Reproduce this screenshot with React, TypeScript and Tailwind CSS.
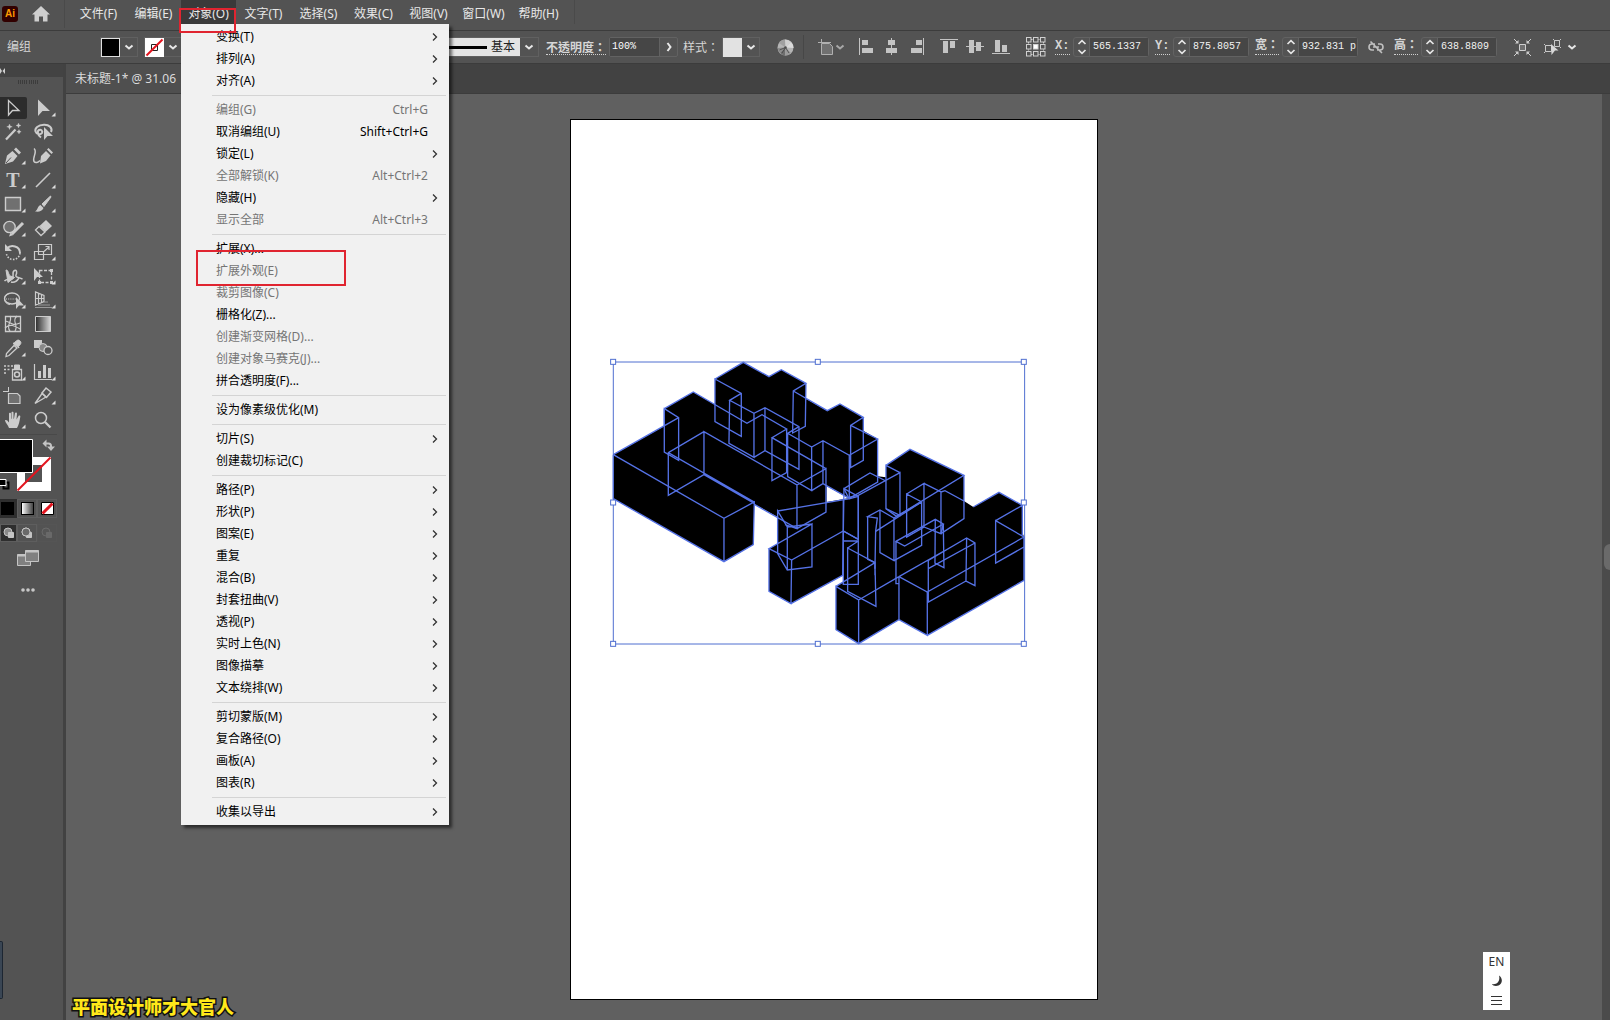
import React from 'react';
import clsx from 'clsx';

type MenuEntry = { label: string; shortcut?: string; sub?: boolean; off?: boolean; marked?: boolean };

const menuBar = ['文件(F)', '编辑(E)', '对象(O)', '文字(T)', '选择(S)', '效果(C)', '视图(V)', '窗口(W)', '帮助(H)'];

const objectMenu: MenuEntry[][] = [
    [
        { label: '变换(T)', sub: true },
        { label: '排列(A)', sub: true },
        { label: '对齐(A)', sub: true },
    ],
    [
        { label: '编组(G)', shortcut: 'Ctrl+G', off: true },
        { label: '取消编组(U)', shortcut: 'Shift+Ctrl+G' },
        { label: '锁定(L)', sub: true },
        { label: '全部解锁(K)', shortcut: 'Alt+Ctrl+2', off: true },
        { label: '隐藏(H)', sub: true },
        { label: '显示全部', shortcut: 'Alt+Ctrl+3', off: true },
    ],
    [
        { label: '扩展(X)...' },
        { label: '扩展外观(E)', off: true, marked: true },
        { label: '裁剪图像(C)', off: true },
        { label: '栅格化(Z)...' },
        { label: '创建渐变网格(D)...', off: true },
        { label: '创建对象马赛克(J)...', off: true },
        { label: '拼合透明度(F)...' },
    ],
    [{ label: '设为像素级优化(M)' }],
    [{ label: '切片(S)', sub: true }, { label: '创建裁切标记(C)' }],
    [
        { label: '路径(P)', sub: true },
        { label: '形状(P)', sub: true },
        { label: '图案(E)', sub: true },
        { label: '重复', sub: true },
        { label: '混合(B)', sub: true },
        { label: '封套扭曲(V)', sub: true },
        { label: '透视(P)', sub: true },
        { label: '实时上色(N)', sub: true },
        { label: '图像描摹', sub: true },
        { label: '文本绕排(W)', sub: true },
    ],
    [
        { label: '剪切蒙版(M)', sub: true },
        { label: '复合路径(O)', sub: true },
        { label: '画板(A)', sub: true },
        { label: '图表(R)', sub: true },
    ],
    [{ label: '收集以导出', sub: true }],
];

const Chevron: React.FC<{ dir?: 'down' | 'right' }> = ({ dir = 'down' }) => (
    <svg width="10" height="10" viewBox="0 0 10 10" fill="none" stroke="currentColor" strokeWidth="2">
        <path d={dir === 'down' ? 'M1.5 3.5 5 6.5 8.5 3.5' : 'M3.5 1 6.5 5 3.5 9'} />
    </svg>
);

const ObjectMenu: React.FC = () => (
    <div
        role="menu"
        className="absolute left-0 top-full z-20 w-[268px] bg-[#f1f1f1] py-[2px] text-black shadow-[3px_3px_3px_rgba(0,0,0,0.55)]"
    >
        {objectMenu.map((group, i) => (
            <div key={i}>
                {i > 0 && <div className="my-[3px] ml-[31px] mr-[3px] h-px bg-[#d4d4d4]" />}
                {group.map((item) => (
                    <button
                        key={item.label}
                        role="menuitem"
                        className={clsx(
                            'relative flex h-[22px] w-full items-center pl-[35px] pr-[9px] text-left',
                            item.off && 'text-[#757575]'
                        )}
                    >
                        <span className="flex-1">{item.label}</span>
                        <span className="mr-[12px]">{item.shortcut}</span>
                        {item.sub && (
                            <svg className="-ml-[12px]" width="12" height="12" viewBox="0 0 12 12" fill="none" stroke="#333" strokeWidth="1.3">
                                <path d="M5 2.5 8.5 6 5 9.5" />
                            </svg>
                        )}
                        {item.marked && (
                            <span className="absolute -top-[10px] left-[15px] z-10 h-[36px] w-[150px] border-2 border-[#e02430]" />
                        )}
                    </button>
                ))}
            </div>
        ))}
    </div>
);

const MenuBar: React.FC = () => (
    <header className="flex h-[30px] items-start bg-[#535353] text-[#e8e8e8]">
        <div className="flex h-[28px] w-[65px] items-center gap-[14px] border-r border-[#4a4a4a] pl-[2px]">
            <span className="flex size-[16px] items-center justify-center rounded-[3px] bg-[#310000] font-['Liberation_Sans'] text-[10px] font-bold text-[#ff9a00]">
                Ai
            </span>
            <button aria-label="主页">
                <svg width="18" height="16" viewBox="0 0 18 16" fill="#cfcfcf">
                    <path d="M9 0 18 8.5H15.5V15.5H11V10.5H7V15.5H2.5V8.5H0z" />
                </svg>
            </button>
        </div>
        <nav className="flex border-r border-[#4a4a4a] pl-[6px] pr-[8px]">
            {menuBar.map((name) => {
                const open = name === '对象(O)';
                return (
                    <div key={name} className="relative">
                        <button className={clsx('h-[24px] w-[55px] pt-[3px] whitespace-nowrap', open && 'bg-[#3a3a3a]')}>{name}</button>
                        {open && (
                            <>
                                <ObjectMenu />
                                <span className="pointer-events-none absolute -left-[2px] top-[8px] z-30 h-[25px] w-[57px] border-2 border-[#e02430]" />
                            </>
                        )}
                    </div>
                );
            })}
        </nav>
    </header>
);

const Divider: React.FC = () => <span className="h-[24px] w-px shrink-0 bg-[#474747]" />;

const NumberField: React.FC<{ id: string; label: string; value: string }> = ({ id, label, value }) => (
    <div className="flex shrink-0 items-center gap-[3px]">
        <label
            htmlFor={id}
            className="min-w-[15px] whitespace-nowrap border-b border-dotted border-[#d0d0d0] font-['Liberation_Mono','Noto_Sans_CJK_TC',monospace] leading-[15px] font-bold"
        >
            {label}
        </label>
        <div className="flex h-[20px] w-[76px] rounded-[3px] border border-[#626262]">
            <button aria-label="增减" className="flex w-[16px] items-center justify-center border-r border-[#626262]">
                <svg width="10" height="16" viewBox="0 0 10 16" fill="none" stroke="#e6e6e6" strokeWidth="1.7">
                    <path d="M1.5 5 5 1.7 8.5 5M1.5 11 5 14.3 8.5 11" />
                </svg>
            </button>
            <input
                id={id}
                defaultValue={value}
                className="min-w-0 flex-1 bg-[#464646] pl-[3px] font-['Liberation_Mono',monospace] text-[10px] text-[#f2f2f2]"
            />
        </div>
    </div>
);

const alignIcons = [
    'M1 0h1v17h-1zM4 2h6v5h-6zM4 10h11v5h-11z',
    'M7 0h1v17h-1zM4 2h7v5h-7zM2 10h11v5h-11z',
    'M13 0h1v17h-1zM6 2h6v5h-6zM1 10h11v5h-11z',
    'M0 1h18v1h-18zM3 3h5v12h-5zM10 3h5v7h-5z',
    'M0 8h18v1h-18zM3 2h5v13h-5zM10 4h5v9h-5z',
    'M0 15h18v1h-18zM3 2h5v12h-5zM10 7h5v7h-5z',
];

const OptionsBar: React.FC = () => (
    <section className="flex h-[34px] items-center overflow-hidden border-y border-[#3c3c3c] bg-[#535353] text-[#d6d6d6]">
        <span className="w-[100px] shrink-0 pl-[7px]">编组</span>
        <button aria-label="填色" className="flex h-[20px] w-[38px] shrink-0 items-center border border-[#606060] text-[#e8e8e8]">
            <span className="size-[19px] border border-[#e0e0e0] bg-black" />
            <span className="ml-[4px]"><Chevron /></span>
        </button>
        <button aria-label="描边" className="ml-[6px] flex h-[20px] w-[38px] shrink-0 items-center border border-[#606060] text-[#e8e8e8]">
            <svg width="19" height="19" viewBox="0 0 19 19">
                <path d="M0 0h19v19h-19z" fill="#fff" />
                <path d="M6.500 6.500h6v6h-6z" fill="none" stroke="#222" />
                <path d="M1.500 17.500 17.500 1.500" stroke="#e3141e" strokeWidth="2" />
            </svg>
            <span className="ml-[4px]"><Chevron /></span>
        </button>
        <button
            aria-label="画笔定义"
            className="ml-[218px] flex h-[20px] w-[139px] shrink-0 items-center border border-[#606060] text-[#e8e8e8]"
        >
            <span className="flex h-full w-[119px] items-center gap-[4px] bg-[#e4e4e4] pr-[5px] text-[#222]">
                <span className="h-[3px] flex-1 bg-black" />
                基本
            </span>
            <span className="ml-[4px]"><Chevron /></span>
        </button>
        <label
            htmlFor="opacity"
            className="ml-[7px] shrink-0 whitespace-nowrap border-b border-dotted border-[#d0d0d0] font-['Noto_Sans_CJK_TC',sans-serif] leading-[15px] font-bold"
        >
            不透明度：
        </label>
        <div className="ml-[3px] flex h-[20px] w-[69px] shrink-0 rounded-[2px] border border-[#626262] text-[#e8e8e8]">
            <input
                id="opacity"
                defaultValue="100%"
                className="min-w-0 flex-1 bg-[#464646] pl-[2px] font-['Liberation_Mono',monospace] text-[10px] text-white"
            />
            <button aria-label="不透明度选项" className="flex w-[18px] items-center justify-center border-l border-[#626262]">
                <Chevron dir="right" />
            </button>
        </div>
        <span className="ml-[5px] shrink-0 font-['Noto_Sans_CJK_TC',sans-serif]">样式：</span>
        <button aria-label="图形样式" className="ml-[3px] flex h-[20px] w-[38px] shrink-0 items-center border border-[#606060] text-[#e8e8e8]">
            <span className="size-[19px] bg-[#e2e2e2]" />
            <span className="ml-[4px]"><Chevron /></span>
        </button>
        <span className="ml-[8px]"><Divider /></span>
        <button aria-label="重新着色图稿" className="mx-[9px] shrink-0">
            <svg width="17" height="17" viewBox="0 0 17 17">
                <circle cx="8.500" cy="8.500" r="8" fill="#b5b5b5" />
                <path d="M8.500 8.500 2 4A8 8 0 0 1 8 .5z" fill="#a0a0a0" />
                <path d="M8.500 8.500 8 .5A8 8 0 0 1 14 3z" fill="#cfcfcf" />
                <path d="M8.500 8.500 3 14A8 8 0 0 1 .5 9z" fill="#8d8d8d" />
                <path d="M8.500 8.500 3 14A8 8 0 0 0 8 16.500z" fill="#6e6e6e" />
                <path d="M8.500 8.500 14 14A8 8 0 0 1 8 16.500z" fill="#9a9a9a" />
                <path d="M8.500 8.500 16.500 9A8 8 0 0 0 14 3z" fill="#dadada" />
                <path d="M8.500 8.500 12 14M8.500 8.500 5 14M8.500 8.500 2.500 11" stroke="#444" strokeWidth=".8" />
                <circle cx="8.500" cy="8.500" r="1.200" fill="#4d4d4d" />
            </svg>
        </button>
        <Divider />
        <button aria-label="对齐画板" className="ml-[14px] flex shrink-0 items-center text-[#a8a8a8]">
            <svg width="17" height="17" viewBox="0 0 17 17" fill="none" stroke="#b0b0b0">
                <path d="M3.500 0v4M0 3.500h13" />
                <path d="M3.500 4.500h8l3 3v8h-11z" fill="#707070" />
            </svg>
            <Chevron />
        </button>
        <div className="ml-[13px] flex shrink-0 gap-[10px]">
            {alignIcons.slice(0, 3).map((d) => (
                <button key={d} aria-label="水平对齐">
                    <svg width="16" height="18" viewBox="0 0 16 18" fill="#c4c4c4"><path d={d} /></svg>
                </button>
            ))}
        </div>
        <div className="ml-[14px] flex shrink-0 gap-[8px]">
            {alignIcons.slice(3).map((d) => (
                <button key={d} aria-label="垂直对齐">
                    <svg width="18" height="18" viewBox="0 0 18 18" fill="#c4c4c4"><path d={d} /></svg>
                </button>
            ))}
        </div>
        <span className="ml-[10px] mr-[6px]"><Divider /></span>
        <button aria-label="参考点" className="mr-[9px] shrink-0">
            <svg width="20" height="20" viewBox="0 0 20 20" fill="none" stroke="#d0d0d0">
                <path d="M4.500 2.500h11M4.500 17.500h11M2.500 4.500v11M17.500 4.500v11" strokeDasharray="2 1" />
                {[0.5, 7.5, 14.5].map((y) => [0.5, 7.5, 14.5].map((x) => (
                    <rect key={`${x}-${y}`} x={x} y={y} width="4.500" height="4.500" fill={x === 7.5 && y === 7.5 ? '#fff' : '#535353'} />
                )))}
            </svg>
        </button>
        <div className="flex shrink-0 items-center gap-[6px]">
            <NumberField id="x" label="X:" value="565.1337" />
            <NumberField id="y" label="Y:" value="875.8057" />
            <NumberField id="w" label="宽：" value="932.831 p" />
        </div>
        <button aria-label="约束宽度和高度比例" className="mx-[10px] shrink-0">
            <svg width="16" height="16" viewBox="0 0 16 16" fill="none" stroke="#c0c0c0" strokeWidth="1.600">
                <path d="M7 5H4a3 3 0 0 0 0 6h2M9 11h3a3 3 0 0 0 0-6h-2M5 8h6M2.500 2.500 14 14" />
            </svg>
        </button>
        <NumberField id="h" label="高：" value="638.8809" />
        <span className="ml-[6px]"><Divider /></span>
        <button aria-label="隔离选中的对象" className="ml-[11px] shrink-0">
            <svg width="17" height="17" viewBox="0 0 17 17" fill="none" stroke="#d0d0d0">
                <path d="M5.500 5.500h6v6h-6z" fill="#707070" />
                <path d="M0 0 4 4M17 0 13 4M0 17 4 13M17 17 13 13" />
                <path d="M4.500 1V4.500H1zM12.500 1V4.500H16zM4.500 16V12.500H1zM12.500 16V12.500H16z" fill="#d0d0d0" stroke="none" />
            </svg>
        </button>
        <button aria-label="选择类似的对象" className="ml-[13px] flex shrink-0 items-center gap-[5px] text-[#e6e6e6]">
            <svg width="18" height="18" viewBox="0 0 18 18" fill="none" stroke="#c8c8c8">
                <path d="M1.500 7.500h6v6h-6zM10.500 2.500h5v6h-5zM0 6l1.500 1.500M0 15l1.500-1.500M9 1l1.500 1.500M17 1l-1.500 1.500M17 10l-1.500-1.500" />
                <path d="M7 6 14.500 12.500H11L7.500 17z" fill="#d8d8d8" stroke="none" />
            </svg>
            <Chevron />
        </button>
    </section>
);

const tools: { name: string; more?: boolean; icon: React.ReactNode }[] = [
    { name: '选择', icon: <path d="M8.500 3.500V18l4-4.500h6.500z" strokeWidth="1.300" /> },
    { name: '直接选择', more: true, icon: <path d="M8 2.500V19l4.500-5H20z" fill="#ccc" stroke="none" /> },
    {
        name: '魔棒',
        icon: (
            <>
                <path d="M6 18.500 15.500 8.500" strokeWidth="2.200" />
                <path d="M9.500 3 10.300 5 12.300 5.800 10.300 6.600 9.500 8.600 8.700 6.600 6.700 5.800 8.700 5zM18.500 2 19.200 3.800 21 4.500 19.200 5.200 18.500 7 17.800 5.200 16 4.500 17.800 3.800zM19 8.500 19.700 10 21.200 10.700 19.700 11.400 19 13 18.300 11.400 16.800 10.700 18.300 10z" fill="#ccc" strokeWidth=".3" />
            </>
        ),
    },
    {
        name: '套索',
        icon: (
            <>
                <path d="M21 11C23 7 19 3.500 14 3.700 8 4 4.500 7 5.500 10.500c1 3 5 3.500 6.500 1.500 1-2-1-4-3-3s-1.500 5 2 7.500" strokeWidth="2" />
                <path d="M14 6v13l3.500-4H23z" fill="#ccc" stroke="none" />
            </>
        ),
    },
    {
        name: '钢笔',
        more: true,
        icon: (
            <>
                <path d="M5 19 7 10.500 12.500 6 17.500 11 13 16.500z" fill="#ccc" stroke="none" />
                <path d="M14 4.500 16 2.500 21 7.500 19 9.500z" fill="#ccc" stroke="none" />
                <path d="M6 18 11 12.500" stroke="#535353" />
            </>
        ),
    },
    {
        name: '曲率',
        icon: (
            <>
                <path d="M10 18.500 11 11 16 6 20.500 10.500 16 16z" fill="#ccc" stroke="none" />
                <path d="M17 4.500 18.500 3 23 7.500 21.500 9z" fill="#ccc" stroke="none" />
                <path d="M4 3.500c4 3-2 9 0 13 1.500 2 4 1 6-1" strokeWidth="1.500" />
            </>
        ),
    },
    {
        name: '文字',
        more: true,
        icon: (
            <text x="13" y="18" textAnchor="middle" fill="#ccc" stroke="none" fontSize="20" fontWeight="bold" fontFamily="Liberation Serif, serif">
                T
            </text>
        ),
    },
    { name: '直线段', more: true, icon: <path d="M6 18 20 4" strokeWidth="1.600" /> },
    { name: '矩形', more: true, icon: <path d="M5.500 4.500h15v13h-15z" fill="#707070" strokeWidth="1.400" /> },
    {
        name: '画笔',
        more: true,
        icon: (
            <>
                <path d="M20.500 3 12 11l2 2.500L21 4z" fill="#ccc" />
                <path d="M10.500 12 13.500 15C12 18.500 9 19 5 18.500 8 17 7.500 13 10.500 12z" fill="#ccc" stroke="none" />
            </>
        ),
    },
    {
        name: 'Shaper',
        more: true,
        icon: (
            <>
                <circle cx="9.500" cy="10" r="5.700" fill="#707070" strokeWidth="1.300" />
                <path d="M12 17 23 6" strokeWidth="3" />
                <path d="M9 19.500 10.500 15.500 13.500 18z" fill="#ccc" stroke="none" />
            </>
        ),
    },
    {
        name: '橡皮擦',
        more: true,
        icon: (
            <>
                <path d="M9.500 9 16 3 22 9 15.500 15z" fill="#ccc" stroke="none" />
                <path d="M9 9.500 5.500 13 11 18.500 15 15z" strokeWidth="1.300" />
            </>
        ),
    },
    {
        name: '旋转',
        more: true,
        icon: (
            <>
                <path d="M7 7.500C11 3 20 5 20 12" strokeWidth="2" />
                <path d="M20 12c-.5 5-5 7-8 6.500s-5-3-5.500-5.500" strokeWidth="1.600" strokeDasharray="1.500 1.500" />
                <path d="M5 3v7h7z" fill="#ccc" stroke="none" />
            </>
        ),
    },
    {
        name: '比例缩放',
        more: true,
        icon: (
            <>
                <path d="M8.500 3.500h13v10h-13zM4.500 10.500h9v8h-9z" strokeWidth="1.200" />
                <path d="M14 10.500 19 6M15.500 5.500H19V9" strokeWidth="1.200" />
            </>
        ),
    },
    {
        name: '宽度',
        more: true,
        icon: (
            <>
                <path d="M4.500 16C8 12.500 9 16 12 14S11 7 14.500 5.500C17 4.500 17 8 16 10s2 2 6.500 4" strokeWidth="1.500" />
                <path d="M6 5c3 0 1.500 4 4.500 6l4 1.500L8 17.500z" fill="#ccc" strokeWidth="1" />
                <path d="M11 17c3 1 6-1 8-4" strokeWidth="1.500" />
            </>
        ),
    },
    {
        name: '自由变换',
        more: true,
        icon: (
            <>
                <path d="M9.500 5.500h12v12h-12z" strokeDasharray="3 1.500" strokeWidth="1.300" />
                <path d="M4 3v13l3-4h6z" fill="#ccc" stroke="none" />
                <path d="M20 4h3v3h-3zM20 16h3v3h-3zM8 16h3v3H8z" fill="#ccc" stroke="none" />
            </>
        ),
    },
    {
        name: '形状生成器',
        more: true,
        icon: (
            <>
                <ellipse cx="12" cy="9.500" rx="7.500" ry="5.500" strokeWidth="1.300" />
                <path d="M6 10h11" strokeDasharray="1 1.200" />
                <path d="M10 15.500a5.500 5.500 0 0 1 0-11" />
                <path d="M16 8v12l3-3.500h5z" fill="#ccc" stroke="none" />
            </>
        ),
    },
    {
        name: '透视网格',
        more: true,
        icon: (
            <>
                <path d="M5.500 3v13L14 12.500V6.500zM5.500 9.500H14M8.500 4.500V15M11.500 5.500V13.500" strokeWidth="1.200" />
                <path d="M5 18.500h17M8 16h12M14 13h4" stroke="#999" />
            </>
        ),
    },
    {
        name: '网格',
        icon: (
            <>
                <path d="M5.500 3.500h15v15h-15z" strokeWidth="1.300" />
                <path d="M5 8c5 0 6 6 15 2M5 15c5-5 10-2 15 1M10 3c3 6-5 9 0 15M17 3c-6 5 2 9-2 15" strokeWidth="1.200" />
            </>
        ),
    },
    {
        name: '渐变',
        icon: (
            <>
                <defs>
                    <linearGradient id="toolGradient">
                        <stop offset="0" stopColor="#2c2c2c" />
                        <stop offset="1" stopColor="#d8d8d8" />
                    </linearGradient>
                </defs>
                <path d="M5.500 3.500h15v15h-15z" fill="url(#toolGradient)" />
            </>
        ),
    },
    {
        name: '吸管',
        more: true,
        icon: (
            <>
                <path d="M6 19.500 6.500 16.500 14 8.500 17 11 9 18.500z" strokeWidth="1.300" />
                <path d="M13 6.500 14.500 5.500 17 3.500C19 2 22 5 20.500 7L18.500 9.500 19 11z" fill="#ccc" />
            </>
        ),
    },
    {
        name: '混合',
        icon: (
            <>
                <path d="M4 3h8v8H4z" fill="#ccc" stroke="none" />
                <circle cx="13" cy="10.500" r="4" fill="#888" />
                <circle cx="18" cy="13.500" r="4" fill="#535353" strokeWidth="1.300" />
            </>
        ),
    },
    {
        name: '符号喷枪',
        more: true,
        icon: (
            <>
                <path d="M12.500 8.500h9v10.500h-9z" strokeWidth="1.300" />
                <path d="M14.500 4h5v4h-5z" fill="#ccc" />
                <circle cx="17" cy="13.500" r="2.500" strokeWidth="1.500" />
                <path d="M4 5h2M7.500 5h2M11 5h2M4 8.500h2M7.500 8.500h2M4 12h2" strokeWidth="1.500" />
            </>
        ),
    },
    {
        name: '柱形图',
        more: true,
        icon: (
            <>
                <path d="M4.500 3v15.500H22" strokeWidth="1.200" />
                <path d="M8 10h3v7H8zM13 4h3v13h-3zM18 7h3v10h-3z" fill="#ccc" stroke="none" />
            </>
        ),
    },
    {
        name: '画板',
        icon: (
            <>
                <path d="M8.500 2v5M3 6.500h5" />
                <path d="M8.500 8.500h9l2.500 2.500v7.500H8.500z" fill="#707070" strokeWidth="1.200" />
            </>
        ),
    },
    {
        name: '切片',
        more: true,
        icon: (
            <>
                <path d="M5 18.500 12 8.500 16 12z" strokeWidth="1.400" />
                <path d="M12 8 16 3 21 7 16.500 12.500z" strokeWidth="1.500" />
            </>
        ),
    },
    {
        name: '抓手',
        more: true,
        icon: (
            <path
                d="M9 19C8 16 5 13.500 5 11c2-.5 3 1 4 2.500V4.500c0-1 2-1 2 0V9.500l.5.500V3.500c0-1 2-1 2 0V10l.5-.500 1-5.500c.5-1 2-.7 2 .5L16.500 10.500 18.500 7c.7-1 2-.3 1.800.7C19.500 12 19 16 17 19z"
                fill="#ccc"
                stroke="none"
            />
        ),
    },
    {
        name: '缩放',
        icon: (
            <>
                <circle cx="11" cy="9" r="5.500" strokeWidth="1.500" />
                <path d="M15 13 20.500 18.500" strokeWidth="2.300" />
            </>
        ),
    },
];

const ToolPanel: React.FC = () => (
    <aside className="relative w-[66px] shrink-0 border-r-[3px] border-[#424242] bg-[#535353]">
        <div className="flex h-[13px] items-center bg-[#434343]">
            <svg width="6" height="6" viewBox="0 0 6 6" fill="#cfcfcf"><path d="M0 0v6l2-3zM5 0v6L2.500 3z" /></svg>
        </div>
        <div className="ml-[18px] mt-[3px] flex h-[4px] w-[20px] justify-between">
            {Array.from({ length: 10 }).map((_, i) => (
                <span key={i} className="w-px bg-[#3c3c3c]" />
            ))}
        </div>
        <div className="mt-[13px] grid w-[57px] grid-cols-[27px_27px] gap-x-[3px] gap-y-[2px]">
            {tools.map((tool, i) => (
                <button key={tool.name} aria-label={tool.name} className={clsx('h-[22px] rounded-r-[2px]', i === 0 && 'bg-[#2c2c2c]')}>
                    <svg width="27" height="22" viewBox="0 0 27 22" fill="none" stroke="#ccc">
                        {tool.icon}
                        {tool.more && <path d="M25.500 15.500v4h-4z" fill="#ddd" stroke="none" />}
                    </svg>
                </button>
            ))}
        </div>
        <div className="mt-[3px] h-px w-[57px] bg-[#494949]" />
        <button aria-label="填色和描边" className="mt-[3px] block">
            <svg width="57" height="56" viewBox="0 0 57 56">
                <path d="M17 19h34v34h-34zM25 27v17h17v-17z" fill="#fff" fillRule="evenodd" />
                <path d="M17.500 52.500 50.500 19.500" stroke="#e3141e" strokeWidth="2" />
                <path d="M-1 1.500h33.500v33h-33.500z" fill="#000" stroke="#fff" />
                <path d="M45.500 5.500h3a2.500 2.500 0 0 1 2.500 2.500v2" fill="none" stroke="#c4c4c4" strokeWidth="2" />
                <path d="M46.500 1.500v8l-4-4zM47 8.500h8l-4 4.500z" fill="#c4c4c4" />
                <path d="M3.500 44.500h5v6h-5z" fill="none" stroke="#000" strokeWidth="2" />
                <path d="M-1 41.500h7v6h-7z" fill="#000" stroke="#fff" />
            </svg>
        </button>
        <div className="mt-[5px] flex">
            <button aria-label="颜色" className="h-[19px] w-[17px] bg-[#2e2e2e] pl-[1px]"><span className="block size-[13px] bg-black" /></button>
            <button aria-label="渐变填充" className="flex h-[19px] w-[20px] items-center justify-center border border-[#5e5e5e]">
                <span className="size-[13px] border border-black bg-linear-to-r from-white to-[#444]" />
            </button>
            <button aria-label="无" className="flex h-[19px] w-[20px] items-center justify-center border border-[#5e5e5e]">
                <svg width="13" height="13" viewBox="0 0 13 13">
                    <path d="M.5.5h12v12h-12z" fill="#fff" stroke="#000" />
                    <path d="M1.500 11.500 11.500 1.500" stroke="#e3141e" strokeWidth="3" />
                </svg>
            </button>
        </div>
        <div className="mt-[6px] flex">
            {['正常绘图', '背面绘图', '内部绘图'].map((name, i) => (
                <button
                    key={name}
                    aria-label={name}
                    className={clsx(
                        'flex h-[18px] items-center justify-center border border-[#5e5e5e]',
                        i === 0 ? 'w-[17px] bg-[#2e2e2e]' : 'w-[20px]',
                        i === 2 && 'opacity-20'
                    )}
                >
                    <svg width="12" height="12" viewBox="0 0 12 12" stroke="#c4c4c4">
                        <circle cx="5" cy="5" r="4" fill={i === 0 ? '#8a8a8a' : '#666'} />
                        <path d="M5.500 5.500h5v5h-5z" fill="#c4c4c4" />
                        {i === 1 && <circle cx="5" cy="5" r="4" fill="#6a6a6a" />}
                    </svg>
                </button>
            ))}
        </div>
        <button aria-label="更改屏幕模式" className="ml-[17px] mt-[8px] block">
            <svg width="22" height="16" viewBox="0 0 22 16" fill="#808080" stroke="#c4c4c4">
                <path d="M.5 4.500h13v11H.5z" />
                <path d="M8.500.5h13v11h-13z" />
                <path d="M8.500 1.500h13M.5 5.500h8" strokeWidth="2" />
            </svg>
        </button>
        <button aria-label="编辑工具栏" className="ml-[21px] mt-[22px] block">
            <svg width="14" height="4" viewBox="0 0 14 4" fill="#c8c8c8">
                <circle cx="2" cy="2" r="1.800" />
                <circle cx="7" cy="2" r="1.800" />
                <circle cx="12" cy="2" r="1.800" />
            </svg>
        </button>
        <span className="absolute bottom-[21px] left-0 h-[58px] w-[3px] rounded-r-[2px] border border-l-0 border-[#1d2632] bg-[#3a4654]" />
    </aside>
);

// Outline of the extruded lettering, the wireframe comes on top
const solid =
    'M40 318 193 232V180L280 130 345 168V91L430 41 507 84 544 63 618 104V150L682 186 720 166 790 206V246L833 271V383L858 386V350L930 302 1092 380V457L1120 475 1197 431 1267 470V550L1272 565V695L982 860 897 813 776 885 708 843V713L730 700V680L573 765 507 728V600L533 585V505L463 467 460 588 372 639 40 450z' +
    'M680 412V460L745 449 735 443z';

const wiresLeft = [
    'M193 180 236 207V335L193 310zM40 318 236 207M40 318V450L372 639 460 588 463 460 372 509 40 318M372 509V639',
    'M312 249 205 312V440L312 378V249L591 409V540L463 467M205 312 463 460M312 378 463 464M591 409 678 360V490L591 540',
    'M193 180 280 130 441 224 486 198 560 241 516 267 678 360M560 241V372L516 396V267M193 180V232',
    'M345 91 424 134V263L345 219zM424 134 389 155 462 194 495 177 597 234V362L495 306V177M389 155 387 284 462 326V194M462 326 495 306',
    'M345 91 430 41 507 84 544 63 618 104 580 127 578 253 616 233 618 104M580 127 682 186 720 166 790 206 752 230V357L790 335V206',
    'M597 234 563 254 635 295 669 276 748 320 833 271 752 230M563 254V384L635 426V295M635 426 669 405V276M669 405 748 449V320M833 271V400L748 449',
    'M533 487 750 450 775 443V572L730 547 575 634 507 600 636 526V655L562 664 533 615V487L562 535V664M562 535 636 526M555 528 591 540',
    'M575 634 573 765 507 728V600M573 765 728 680 732 420 775 443',
];

const wiresRight = [
    'M252 420 330 373 378 397M252 420 265 446 295 440 420 372V500L378 480V350L420 372M378 350 450 302 612 380 402 508 360 484 323 504 352 508 347 548 345 660',
    'M323 504V632L345 642M360 484V612L402 636V508M402 636 485 590V460L440 436V565L492 535V404L440 436M492 404 543 430V555L492 535M543 555 612 510V380M485 460 347 548M543 430 555 426 612 457',
    'M378 480 410 503 485 460M408 578 434 592 550 526 526 512zM408 578V705H417M550 526 552 657 525 643 526 512M543 555 550 526',
    'M505 635 620 568 645 583V711L618 697 620 568M505 635V760L618 697M505 660 645 583M417 684 502 730 792 565 707 516V643L792 595M417 684 552 607M707 516 787 470V560',
    'M417 684V813L296 885 228 843V713L296 754V885M296 754 417 684M502 730V860L417 813M502 860 792 695V565M640 475 717 431 787 470',
    'M228 713 345 642 348 773 263 728V598L345 642M250 450V577H295V707H250V577M263 598 295 577M250 547 295 572V443M345 642V680',
];

const Artboard: React.FC = () => (
    <div className="aspect-[3/5] h-full border border-black bg-white">
        <svg className="size-full" viewBox="-86 -686 1578 2637">
            <path d={solid} fill="#000" fillRule="evenodd" />
            <g fill="none" stroke="#5572e6" strokeWidth="4">
                {wiresLeft.map((d) => <path key={d} d={d} />)}
                <g transform="translate(480 0)">
                    {wiresRight.map((d) => <path key={d} d={d} />)}
                </g>
            </g>
            <g fill="#fff" stroke="#4f6fd0" strokeWidth="3">
                <path d="M40 40H1274V886H40z" fill="none" />
                {[[40, 40], [654, 40], [1272, 40], [40, 462], [1272, 462], [40, 886], [654, 886], [1272, 886]].map(([x, y]) => (
                    <rect key={`${x}-${y}`} x={x - 8} y={y - 8} width="15" height="15" />
                ))}
            </g>
        </svg>
    </div>
);

const App: React.FC = () => (
    <div className="flex h-screen flex-col overflow-hidden bg-[#606060] font-['Noto_Sans','Noto_Sans_CJK_SC',sans-serif] text-[12px] leading-[18px]">
        <MenuBar />
        <OptionsBar />
        <div className="flex min-h-0 flex-1">
            <ToolPanel />
            <main className="flex min-w-0 flex-1 flex-col">
                <div className="h-[30px] shrink-0 border-b border-[#3c3c3c] bg-[#424242]">
                    <button className="h-full w-[260px] bg-[#4f4f4f] pl-[9px] text-left text-[#dcdcdc]">未标题-1* @ 31.06</button>
                </div>
                <div className="relative flex min-h-0 flex-1">
                    <div className="flex min-w-0 flex-1 justify-center pb-[20px] pt-[25px]">
                        <Artboard />
                    </div>
                    <div className="flex w-[8px] flex-col items-end justify-center bg-[#4b4b4b]">
                        <span className="h-[26px] w-[6px] rounded-l-[6px] bg-[#6a6a6a]" />
                    </div>
                    <p className="absolute bottom-0 left-[6px] font-['Noto_Sans_CJK_SC',sans-serif] text-[18px] leading-[28px] font-black text-[#ffe81a] [-webkit-text-stroke:3px_#111] [paint-order:stroke]">
                        平面设计师才大官人
                    </p>
                    <div className="absolute bottom-[10px] right-[100px] flex h-[58px] w-[27px] flex-col items-center bg-white pt-[1px] text-[#333]">
                        <span>EN</span>
                        <svg className="mt-[4px]" width="12" height="12" viewBox="0 0 12 12" fill="#333">
                            <path d="M8 0.500C13 4 11 11 5 11 3 11 1.500 10 1 9 6 10 9.500 6 8 0.500z" />
                        </svg>
                        <svg className="mt-[9px]" width="11" height="9" viewBox="0 0 11 9" fill="#333">
                            <path d="M0 0h11v1H0zM0 4h11v1H0zM0 8h11v1H0z" />
                        </svg>
                    </div>
                </div>
            </main>
        </div>
    </div>
);

export default App;
